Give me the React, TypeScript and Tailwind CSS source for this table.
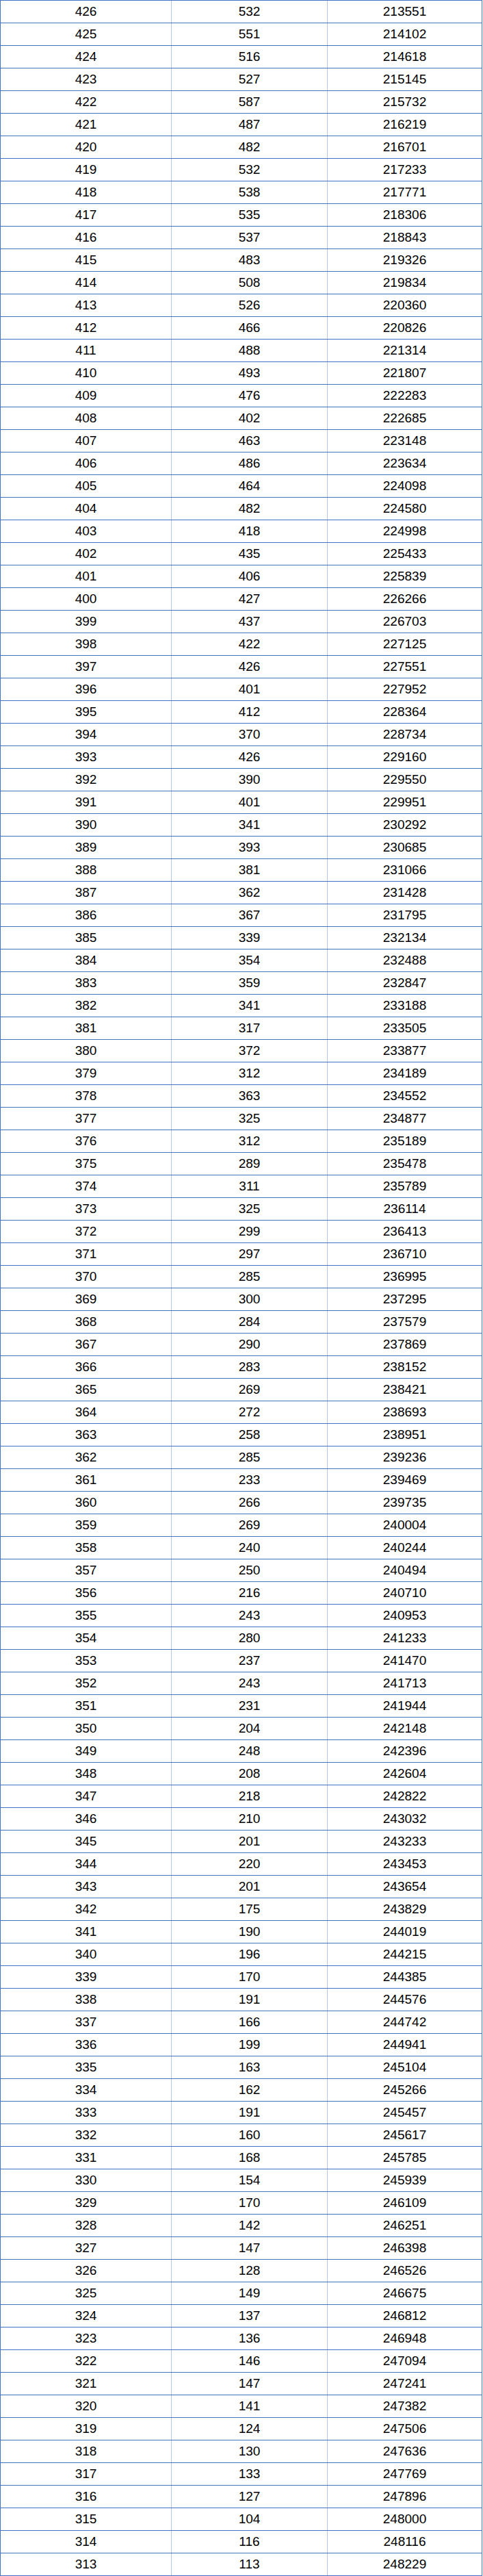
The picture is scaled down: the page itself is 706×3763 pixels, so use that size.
// score distribution table: score / count / cumulative
const counts = [
  532, 551, 516, 527, 587, 487, 482, 532, 538, 535, 537, 483, 508, 526, 466, 488, 493, 476, 402, 463,
  486, 464, 482, 418, 435, 406, 427, 437, 422, 426, 401, 412, 370, 426, 390, 401, 341, 393, 381, 362,
  367, 339, 354, 359, 341, 317, 372, 312, 363, 325, 312, 289, 311, 325, 299, 297, 285, 300, 284, 290,
  283, 269, 272, 258, 285, 233, 266, 269, 240, 250, 216, 243, 280, 237, 243, 231, 204, 248, 208, 218,
  210, 201, 220, 201, 175, 190, 196, 170, 191, 166, 199, 163, 162, 191, 160, 168, 154, 170, 142, 147,
  128, 149, 137, 136, 146, 147, 141, 124, 130, 133, 127, 104, 116, 113,
];

let running = 213551 - 532;
const rows = counts.map((count, i) => {
  running += count;
  return { score: 426 - i, count, total: running };
});

export default function App() {
  return (
    <div className="bg-white w-[706px]">
      <div
        className="w-[705px] border-t border-l border-r border-[#4472c4] text-[19px] text-black"
        style={{ fontFamily: '"Liberation Sans", Arial, sans-serif' }}
      >
        {rows.map((r) => (
          <div key={r.score} className="flex h-[33px] border-b border-[#4472c4]">
            <div className="w-[250px] shrink-0 border-r border-[#b4c6e7] flex items-center justify-center">
              {r.score}
            </div>
            <div className="w-[228px] shrink-0 border-r border-[#b4c6e7] flex items-center justify-center">
              {r.count}
            </div>
            <div className="flex-1 flex items-center justify-center">{r.total}</div>
          </div>
        ))}
      </div>
    </div>
  );
}
